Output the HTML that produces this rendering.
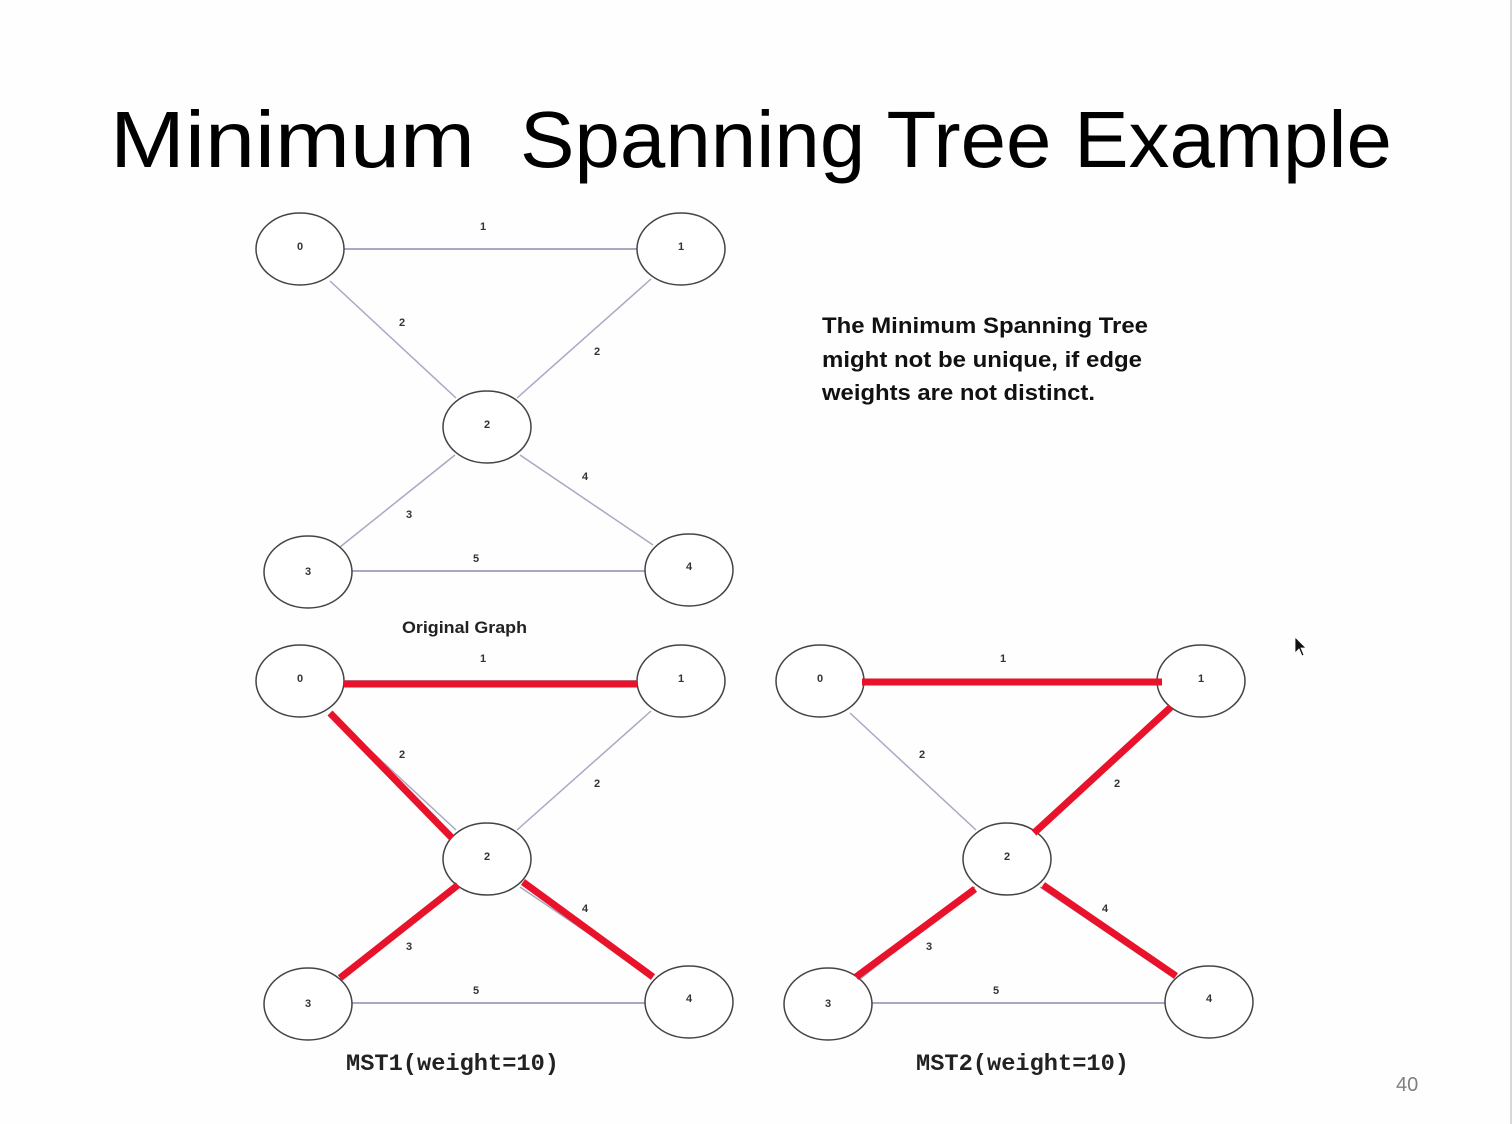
<!DOCTYPE html>
<html><head><meta charset="utf-8"><style>
html,body{margin:0;padding:0;background:#fff;}
svg{display:block}
</style></head><body>
<svg width="1512" height="1124" viewBox="0 0 1512 1124" xmlns="http://www.w3.org/2000/svg">
<rect width="1512" height="1124" fill="#fefefe"/>
<line x1="1511" y1="0" x2="1511" y2="1124" stroke="#d8d8d8" stroke-width="2"/>
<text x="110" y="167" font-family="Liberation Sans, sans-serif" font-size="80" fill="#000" textLength="365" lengthAdjust="spacingAndGlyphs">Minimum</text>
<text x="520" y="167" font-family="Liberation Sans, sans-serif" font-size="80" fill="#000" textLength="872" lengthAdjust="spacingAndGlyphs">Spanning Tree Example</text>

<defs>
<g id="base" font-family="Liberation Sans, sans-serif" font-size="11" fill="#333" font-weight="bold">
  <line x1="344" y1="249" x2="637" y2="249" stroke="#a8a8c4" stroke-width="2"/>
  <line x1="330" y1="281" x2="456" y2="398" stroke="#a8a8c4" stroke-width="1.5"/>
  <line x1="651" y1="279" x2="517" y2="398" stroke="#a8a8c4" stroke-width="1.5"/>
  <line x1="455" y1="455" x2="340" y2="547" stroke="#a8a8c4" stroke-width="1.5"/>
  <line x1="520" y1="455" x2="653" y2="545" stroke="#a8a8c4" stroke-width="1.5"/>
  <line x1="352" y1="571" x2="645" y2="571" stroke="#a8a8c4" stroke-width="2"/>
  <g fill="#fff" stroke="#444" stroke-width="1.5">
    <ellipse cx="300" cy="249" rx="44" ry="36"/>
    <ellipse cx="681" cy="249" rx="44" ry="36"/>
    <ellipse cx="487" cy="427" rx="44" ry="36"/>
    <ellipse cx="308" cy="572" rx="44" ry="36"/>
    <ellipse cx="689" cy="570" rx="44" ry="36"/>
  </g>
  <g text-anchor="middle">
    <text x="300" y="250">0</text><text x="681" y="250">1</text>
    <text x="487" y="428">2</text><text x="308" y="575">3</text><text x="689" y="570">4</text>
    <text x="483" y="230">1</text><text x="402" y="326">2</text><text x="597" y="355">2</text>
    <text x="585" y="480">4</text><text x="409" y="518">3</text><text x="476" y="562">5</text>
  </g>
</g>
</defs>

<use href="#base"/>
<text x="402" y="633" font-family="Liberation Sans, sans-serif" font-size="17" font-weight="bold" fill="#222" textLength="125" lengthAdjust="spacingAndGlyphs">Original Graph</text>

<g font-family="Liberation Sans, sans-serif" font-size="22" font-weight="bold" fill="#111">
<text x="822" y="333" textLength="326" lengthAdjust="spacingAndGlyphs">The Minimum Spanning Tree</text>
<text x="822" y="367" textLength="320" lengthAdjust="spacingAndGlyphs">might not be unique, if edge</text>
<text x="822" y="400" textLength="273" lengthAdjust="spacingAndGlyphs">weights are not distinct.</text>
</g>

<!-- MST1 -->
<g transform="translate(0,432)"><use href="#base"/></g>
<g stroke="#e8132b" stroke-width="7" stroke-linecap="butt">
  <line x1="344" y1="684" x2="637" y2="684"/>
  <line x1="330" y1="713" x2="452" y2="838"/>
  <line x1="458" y1="885" x2="340" y2="978"/>
  <line x1="523" y1="882" x2="653" y2="977"/>
</g>
<text x="346" y="1070" font-family="Liberation Mono, monospace" font-size="23" font-weight="bold" fill="#222" textLength="213" lengthAdjust="spacingAndGlyphs">MST1(weight=10)</text>

<!-- MST2 -->
<g transform="translate(520,432)"><use href="#base"/></g>
<g stroke="#e8132b" stroke-width="7" stroke-linecap="butt">
  <line x1="862" y1="682" x2="1162" y2="682"/>
  <line x1="1171" y1="707" x2="1034" y2="833"/>
  <line x1="975" y1="889" x2="856" y2="977"/>
  <line x1="1043" y1="885" x2="1176" y2="976"/>
</g>
<text x="916" y="1070" font-family="Liberation Mono, monospace" font-size="23" font-weight="bold" fill="#222" textLength="213" lengthAdjust="spacingAndGlyphs">MST2(weight=10)</text>

<!-- cursor -->
<path d="M1295 637 L1295 653 L1299 649 L1302 656 L1304 655 L1301 648 L1306 648 Z" fill="#111" stroke="#fff" stroke-width="0.8"/>

<text x="1396" y="1091" font-family="Liberation Sans, sans-serif" font-size="20" fill="#808080">40</text>
</svg>
</body></html>
